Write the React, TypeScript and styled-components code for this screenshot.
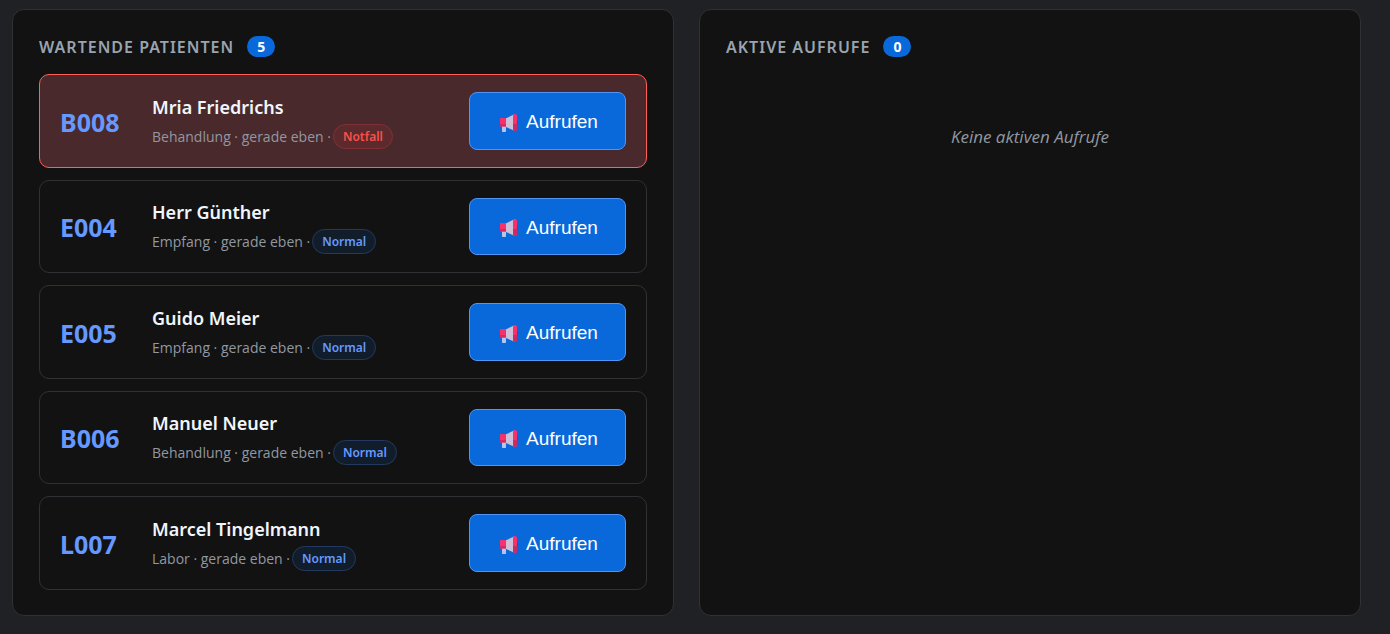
import React from "react";
import styled, { createGlobalStyle } from "styled-components";

const GlobalStyle = createGlobalStyle`
  * { box-sizing: border-box; }
  body {
    margin: 0;
    background: #202124;
    color: #f0f6fc;
    font-family: "Noto Sans", "Open Sans", sans-serif;
  }
`;

const Page = styled.main`
  display: grid;
  grid-template-columns: 1fr 1fr;
  gap: 25px;
  padding: 9px 29px 18px 12px;
`;

const Panel = styled.section`
  min-width: 0;
  padding: 25px 26px;
  background: #121212;
  border: 1px solid #303134;
  border-radius: 12px;
`;

const PanelHeader = styled.header`
  display: flex;
  align-items: center;
  gap: 13px;
  margin-bottom: 16px;
`;

const PanelTitle = styled.h2`
  margin: 0;
  padding-top: 2px;
  font-size: 16px;
  line-height: 21px;
  font-weight: 600;
  letter-spacing: 1px;
  text-transform: uppercase;
  color: #9aa4af;
`;

const Count = styled.span`
  min-width: 28px;
  padding: 0 9px;
  border-radius: 11px;
  background: #0969da;
  color: #ffffff;
  font-size: 14px;
  line-height: 21px;
  font-weight: 700;
  text-align: center;
`;

const PatientList = styled.ul`
  display: flex;
  flex-direction: column;
  gap: 12px;
  margin: 0;
  padding: 0;
  list-style: none;
`;

const PatientRow = styled.li<{ $urgent: boolean }>`
  display: flex;
  align-items: center;
  padding: 17px 20px;
  border: 1px solid ${(p) => (p.$urgent ? "#ff5f56" : "#303134")};
  border-radius: 10px;
  background: ${(p) => (p.$urgent ? "#4a292c" : "transparent")};
`;

const Ticket = styled.strong`
  flex: 0 0 92px;
  padding-top: 2px;
  font-size: 25px;
  line-height: 32px;
  font-weight: 700;
  color: #6699ff;
`;

const Info = styled.div`
  flex: 1;
  min-width: 0;
`;

const Name = styled.div`
  font-size: 18px;
  line-height: 28px;
  font-weight: 600;
`;

const Meta = styled.div`
  display: flex;
  align-items: center;
  gap: 2px;
  margin-top: 3px;
  font-family: "Open Sans", "Noto Sans", sans-serif;
  font-size: 14px;
  line-height: 25px;
  color: #9198a1;
`;

const Priority = styled.span<{ $urgent: boolean }>`
  padding: 0 9px;
  border: 1px solid ${(p) => (p.$urgent ? "#7f3136" : "#23395f")};
  border-radius: 13px;
  background: ${(p) => (p.$urgent ? "#5c292c" : "#111d2b")};
  color: ${(p) => (p.$urgent ? "#f85149" : "#6699ff")};
  font-family: "Noto Sans", "Open Sans", sans-serif;
  font-size: 12px;
  line-height: 23px;
  font-weight: 600;
`;

const CallButton = styled.button`
  display: flex;
  align-items: center;
  justify-content: center;
  gap: 8px;
  flex: 0 0 157px;
  padding: 15px 0 12px 2px;
  border: 1px solid #5094f5;
  border-radius: 8px;
  background: #0969da;
  color: #ffffff;
  font-family: "Liberation Sans", Arial, sans-serif;
  font-size: 19px;
  line-height: 1.5;
  cursor: pointer;
`;

const Empty = styled.p`
  margin: 0;
  padding: 50px 0;
  font-family: "Open Sans", "Noto Sans", sans-serif;
  font-size: 17px;
  line-height: 26px;
  font-style: italic;
  text-align: center;
  color: #9198a1;
`;

function Megaphone() {
  return (
    <svg width="19" height="19" viewBox="0 0 19 19" aria-hidden="true">
      <path d="M3 12h4v6.200q0 .8-.8.8H3.800q-.8 0-.8-.8z" fill="#b9c4e6" />
      <path d="M17 7q2 .3 2 2.500t-2 2.500z" fill="#7d2f59" />
      <path d="M6.500 5.500 15 1.500v16L6.500 13.800z" fill="#cdbfd8" />
      <path d="M2 5h5v8.500H2q-1 0-1-1V6q0-1 1-1z" fill="#f8316b" />
      <path d="M1 11h6v2.500H2q-1 0-1-1z" fill="#d62a63" />
      <rect x="14" y="1" width="4" height="17" rx="2" fill="#f8316b" />
      <path d="M14 11h4v5q0 2-2 2t-2-2z" fill="#cb2b65" />
    </svg>
  );
}

const patients = [
  { ticket: "B008", name: "Mria Friedrichs", area: "Behandlung", urgent: true },
  { ticket: "E004", name: "Herr Günther", area: "Empfang", urgent: false },
  { ticket: "E005", name: "Guido Meier", area: "Empfang", urgent: false },
  { ticket: "B006", name: "Manuel Neuer", area: "Behandlung", urgent: false },
  { ticket: "L007", name: "Marcel Tingelmann", area: "Labor", urgent: false },
];

export default function App() {
  return (
    <>
      <GlobalStyle />
      <Page>
        <Panel>
          <PanelHeader>
            <PanelTitle>Wartende Patienten</PanelTitle>
            <Count>{patients.length}</Count>
          </PanelHeader>
          <PatientList>
            {patients.map((p) => (
              <PatientRow key={p.ticket} $urgent={p.urgent}>
                <Ticket>{p.ticket}</Ticket>
                <Info>
                  <Name>{p.name}</Name>
                  <Meta>
                    <span>{p.area} · gerade eben ·</span>
                    <Priority $urgent={p.urgent}>{p.urgent ? "Notfall" : "Normal"}</Priority>
                  </Meta>
                </Info>
                <CallButton type="button">
                  <Megaphone />
                  Aufrufen
                </CallButton>
              </PatientRow>
            ))}
          </PatientList>
        </Panel>
        <Panel>
          <PanelHeader>
            <PanelTitle>Aktive Aufrufe</PanelTitle>
            <Count>0</Count>
          </PanelHeader>
          <Empty>Keine aktiven Aufrufe</Empty>
        </Panel>
      </Page>
    </>
  );
}
